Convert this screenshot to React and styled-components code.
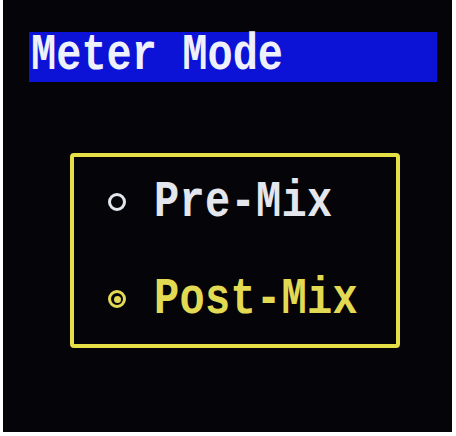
import React from "react";
import styled, { createGlobalStyle } from "styled-components";

const GlobalStyle = createGlobalStyle`
	body {
		margin: 0;
		background: #ffffff;
	}
`;

// the display panel
const Screen = styled.div`
	width: 449px;
	height: 432px;
	margin-left: 3px;
	background: #050409;
	padding: 32px 15px 0 26px;
	box-sizing: border-box;
	font-family: "Liberation Mono", "DejaVu Sans Mono", monospace;
	font-weight: bold;
`;

// stretched lettering, the panel font is taller than it is wide
const Glyphs = styled.span`
	display: inline-block;
	transform: scaleY(1.25);
	transform-origin: center;
	letter-spacing: ${({ $spacing }) => $spacing || "0px"};
`;

const TitleBar = styled.div`
	height: 50px;
	background: #0c12d6;
	color: #eef0fa;
	font-size: 42px;
	line-height: 46px;
	padding-left: 2px;
`;

const OptionBox = styled.div`
	width: 330px;
	height: 195px;
	margin: 71px 0 0 41px;
	border: 4px solid #e6df45;
	border-radius: 4px;
	box-sizing: border-box;
	padding: 25px 0 0 34px;
	display: flex;
	flex-direction: column;
	gap: 57px;
`;

const Option = styled.div`
	height: 40px;
	display: flex;
	align-items: center;
	gap: 28px;
	font-size: 42px;
	color: ${({ $active }) => ($active ? "#e2da52" : "#e4e6ee")};
`;

const Radio = styled.span`
	width: 18px;
	height: 18px;
	flex: none;
	border: 3px solid currentColor;
	border-radius: 50%;
	box-sizing: border-box;
	display: flex;
	align-items: center;
	justify-content: center;

	&::after {
		content: "";
		width: 7px;
		height: 7px;
		border-radius: 50%;
		background: ${({ $checked }) => ($checked ? "currentColor" : "transparent")};
	}
`;

const options = [
	{ label: "Pre-Mix", selected: false },
	{ label: "Post-Mix", selected: true },
];

export default function App() {
	return (
		<>
			<GlobalStyle />
			<Screen>
				<TitleBar>
					<Glyphs>Meter Mode</Glyphs>
				</TitleBar>
				<OptionBox>
					{options.map((opt) => (
						<Option key={opt.label} $active={opt.selected}>
							<Radio $checked={opt.selected} />
							<Glyphs $spacing="0.3px">{opt.label}</Glyphs>
						</Option>
					))}
				</OptionBox>
			</Screen>
		</>
	);
}
